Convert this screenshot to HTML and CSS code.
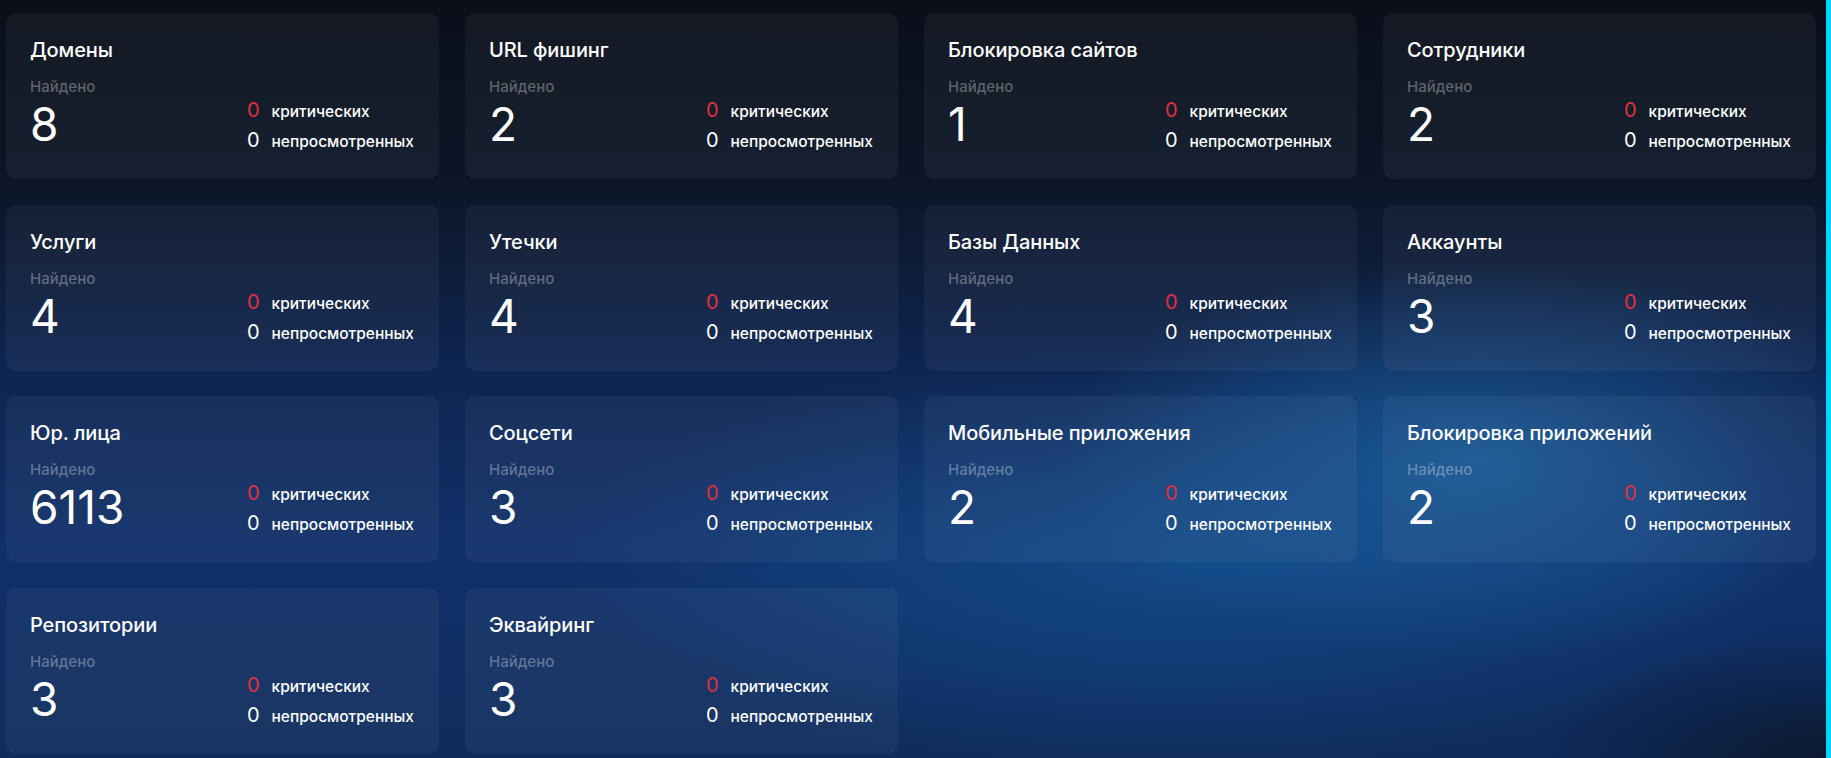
FILE: index.html
```html
<!DOCTYPE html>
<html lang="ru">

<head>
    <meta charset="UTF-8">
    <meta name="viewport" content="width=device-width, initial-scale=1.0">
    <title>Мониторинг</title>
    <link rel="stylesheet" href="styles.css">
</head>

<body>
    <div class="page">
        <main class="grid">
            <div class="card">
                <div class="card-title">Домены</div>
                <div class="card-body">
                    <div class="found">
                        <div class="found-label">Найдено</div>
                        <div class="found-count">8</div>
                    </div>
                    <div class="stats">
                        <span class="stat-num critical">0</span><span class="stat-label">критических</span>
                        <span class="stat-num">0</span><span class="stat-label">непросмотренных</span>
                    </div>
                </div>
            </div>
            <div class="card">
                <div class="card-title">URL фишинг</div>
                <div class="card-body">
                    <div class="found">
                        <div class="found-label">Найдено</div>
                        <div class="found-count">2</div>
                    </div>
                    <div class="stats">
                        <span class="stat-num critical">0</span><span class="stat-label">критических</span>
                        <span class="stat-num">0</span><span class="stat-label">непросмотренных</span>
                    </div>
                </div>
            </div>
            <div class="card">
                <div class="card-title">Блокировка сайтов</div>
                <div class="card-body">
                    <div class="found">
                        <div class="found-label">Найдено</div>
                        <div class="found-count">1</div>
                    </div>
                    <div class="stats">
                        <span class="stat-num critical">0</span><span class="stat-label">критических</span>
                        <span class="stat-num">0</span><span class="stat-label">непросмотренных</span>
                    </div>
                </div>
            </div>
            <div class="card">
                <div class="card-title">Сотрудники</div>
                <div class="card-body">
                    <div class="found">
                        <div class="found-label">Найдено</div>
                        <div class="found-count">2</div>
                    </div>
                    <div class="stats">
                        <span class="stat-num critical">0</span><span class="stat-label">критических</span>
                        <span class="stat-num">0</span><span class="stat-label">непросмотренных</span>
                    </div>
                </div>
            </div>

            <div class="card">
                <div class="card-title">Услуги</div>
                <div class="card-body">
                    <div class="found">
                        <div class="found-label">Найдено</div>
                        <div class="found-count">4</div>
                    </div>
                    <div class="stats">
                        <span class="stat-num critical">0</span><span class="stat-label">критических</span>
                        <span class="stat-num">0</span><span class="stat-label">непросмотренных</span>
                    </div>
                </div>
            </div>
            <div class="card">
                <div class="card-title">Утечки</div>
                <div class="card-body">
                    <div class="found">
                        <div class="found-label">Найдено</div>
                        <div class="found-count">4</div>
                    </div>
                    <div class="stats">
                        <span class="stat-num critical">0</span><span class="stat-label">критических</span>
                        <span class="stat-num">0</span><span class="stat-label">непросмотренных</span>
                    </div>
                </div>
            </div>
            <div class="card">
                <div class="card-title">Базы Данных</div>
                <div class="card-body">
                    <div class="found">
                        <div class="found-label">Найдено</div>
                        <div class="found-count">4</div>
                    </div>
                    <div class="stats">
                        <span class="stat-num critical">0</span><span class="stat-label">критических</span>
                        <span class="stat-num">0</span><span class="stat-label">непросмотренных</span>
                    </div>
                </div>
            </div>
            <div class="card">
                <div class="card-title">Аккаунты</div>
                <div class="card-body">
                    <div class="found">
                        <div class="found-label">Найдено</div>
                        <div class="found-count">3</div>
                    </div>
                    <div class="stats">
                        <span class="stat-num critical">0</span><span class="stat-label">критических</span>
                        <span class="stat-num">0</span><span class="stat-label">непросмотренных</span>
                    </div>
                </div>
            </div>

            <div class="card">
                <div class="card-title">Юр. лица</div>
                <div class="card-body">
                    <div class="found">
                        <div class="found-label">Найдено</div>
                        <div class="found-count">6113</div>
                    </div>
                    <div class="stats">
                        <span class="stat-num critical">0</span><span class="stat-label">критических</span>
                        <span class="stat-num">0</span><span class="stat-label">непросмотренных</span>
                    </div>
                </div>
            </div>
            <div class="card">
                <div class="card-title">Соцсети</div>
                <div class="card-body">
                    <div class="found">
                        <div class="found-label">Найдено</div>
                        <div class="found-count">3</div>
                    </div>
                    <div class="stats">
                        <span class="stat-num critical">0</span><span class="stat-label">критических</span>
                        <span class="stat-num">0</span><span class="stat-label">непросмотренных</span>
                    </div>
                </div>
            </div>
            <div class="card">
                <div class="card-title">Мобильные приложения</div>
                <div class="card-body">
                    <div class="found">
                        <div class="found-label">Найдено</div>
                        <div class="found-count">2</div>
                    </div>
                    <div class="stats">
                        <span class="stat-num critical">0</span><span class="stat-label">критических</span>
                        <span class="stat-num">0</span><span class="stat-label">непросмотренных</span>
                    </div>
                </div>
            </div>
            <div class="card">
                <div class="card-title">Блокировка приложений</div>
                <div class="card-body">
                    <div class="found">
                        <div class="found-label">Найдено</div>
                        <div class="found-count">2</div>
                    </div>
                    <div class="stats">
                        <span class="stat-num critical">0</span><span class="stat-label">критических</span>
                        <span class="stat-num">0</span><span class="stat-label">непросмотренных</span>
                    </div>
                </div>
            </div>

            <div class="card">
                <div class="card-title">Репозитории</div>
                <div class="card-body">
                    <div class="found">
                        <div class="found-label">Найдено</div>
                        <div class="found-count">3</div>
                    </div>
                    <div class="stats">
                        <span class="stat-num critical">0</span><span class="stat-label">критических</span>
                        <span class="stat-num">0</span><span class="stat-label">непросмотренных</span>
                    </div>
                </div>
            </div>
            <div class="card">
                <div class="card-title">Эквайринг</div>
                <div class="card-body">
                    <div class="found">
                        <div class="found-label">Найдено</div>
                        <div class="found-count">3</div>
                    </div>
                    <div class="stats">
                        <span class="stat-num critical">0</span><span class="stat-label">критических</span>
                        <span class="stat-num">0</span><span class="stat-label">непросмотренных</span>
                    </div>
                </div>
            </div>
        </main>
        <div class="edge"></div>
    </div>
</body>

</html>
```

FILE: styles.css
```css
/* General Styles */
html,
body {
    height: 100%;
}

body {
    margin: 0;
    font-family: Inter, "Noto Sans", sans-serif;
    color: #fff;
    background-color: #0c1426;
    background-image:
        radial-gradient(ellipse 300px 120px at 1830px 758px, rgba(11, 22, 40, 0.85), rgba(11, 22, 40, 0) 100%),
        radial-gradient(ellipse 420px 200px at 1480px 460px, rgba(28, 98, 162, 0.75), rgba(28, 98, 162, 0) 100%),
        radial-gradient(ellipse 620px 210px at 1180px 560px, rgba(20, 82, 145, 0.75), rgba(20, 82, 145, 0) 100%),
        linear-gradient(to bottom, #0a0f19 0%, #0c1628 25%, #0e2550 48%, #10306a 72%, #0f2c5c 100%);
    overflow: hidden;
}

.page {
    display: flex;
    height: 100%;
}

.grid {
    flex: 1;
    display: grid;
    grid-template-columns: repeat(4, 433px);
    grid-auto-rows: 166px;
    column-gap: 26px;
    row-gap: 25.5px;
    align-content: start;
    padding: 13px 0 0 6px;
}

/* right edge strip */
.edge {
    width: 5px;
    background-color: #00d5ff;
}

/* Card */
.card {
    background-color: rgba(255, 255, 255, 0.045);
    border-radius: 10px;
    padding: 25px 25px 0 24px;
    display: flex;
    flex-direction: column;
}

.card-title {
    font-size: 20px;
    line-height: 24px;
    font-weight: 500;
    letter-spacing: -0.1px;
}

.card-body {
    display: flex;
    justify-content: space-between;
    align-items: flex-end;
    margin-top: 16px;
}

.found {
    padding-bottom: 8px;
}

.found-label {
    font-size: 15px;
    line-height: 18px;
    font-weight: 500;
    color: rgba(255, 255, 255, 0.33);
}

.found-count {
    margin-top: 6px;
    font-size: 46px;
    line-height: 44px;
    font-weight: 400;
}

.stats {
    display: grid;
    grid-template-columns: auto auto;
    column-gap: 12px;
    align-items: baseline;
    margin-bottom: -2px;
}

.stat-num {
    font-size: 20px;
    line-height: 28px;
}

.stat-num.critical {
    color: #e0313f;
}

.stat-label {
    font-size: 15.5px;
    line-height: 28px;
    font-weight: 500;
}
```
